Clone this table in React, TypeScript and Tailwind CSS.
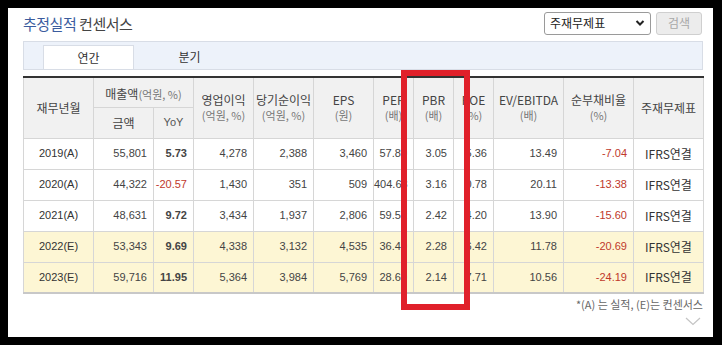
import React from 'react';

type Row = {
  year: string;
  sales: string;
  yoy: string;
  op: string;
  net: string;
  eps: string;
  per: string;
  pbr: string;
  roe: string;
  ev: string;
  debt: string;
  est?: boolean;
};

const rows: Row[] = [
  { year: '2019(A)', sales: '55,801', yoy: '5.73', op: '4,278', net: '2,388', eps: '3,460', per: '57.80', pbr: '3.05', roe: '5.36', ev: '13.49', debt: '-7.04' },
  { year: '2020(A)', sales: '44,322', yoy: '-20.57', op: '1,430', net: '351', eps: '509', per: '404.63', pbr: '3.16', roe: '0.78', ev: '20.11', debt: '-13.38' },
  { year: '2021(A)', sales: '48,631', yoy: '9.72', op: '3,434', net: '1,937', eps: '2,806', per: '59.52', pbr: '2.42', roe: '4.20', ev: '13.90', debt: '-15.60' },
  { year: '2022(E)', sales: '53,343', yoy: '9.69', op: '4,338', net: '3,132', eps: '4,535', per: '36.49', pbr: '2.28', roe: '6.42', ev: '11.78', debt: '-20.69', est: true },
  { year: '2023(E)', sales: '59,716', yoy: '11.95', op: '5,364', net: '3,984', eps: '5,769', per: '28.69', pbr: '2.14', roe: '7.71', ev: '10.56', debt: '-24.19', est: true },
];

const kr = "font-['Noto_Sans_CJK_KR','Noto_Sans',sans-serif]";
const num = "font-['Liberation_Sans','Noto_Sans_CJK_KR',sans-serif]";

const HeadCell: React.FC<{ top: string; sub?: string; rowSpan?: number }> = ({ top, sub, rowSpan }) => (
  <th
    rowSpan={rowSpan}
    className="border border-[#d6d6d6] bg-[#f1f1f1] p-0 text-center align-middle font-normal"
  >
    <div className="text-[12px] leading-[16px] text-[#444]">{top}</div>
    {sub && <div className="text-[11px] leading-[15px] text-[#777]">{sub}</div>}
  </th>
);

const isNeg = (v: string) => v.startsWith('-');

export default function App() {
  const td = 'border border-[#d6d6d6] h-[31px] p-0 pr-[6px] text-right text-[11px] text-[#444]';

  return (
    <div className="relative h-[345px] w-[722px] bg-black p-[8px] pr-[9px]">
      <div className={`h-[329px] w-[705px] bg-white pl-[15px] pr-[11px] pt-[4px] ${kr}`}>
        {/* title + controls */}
        <div className="flex h-[22px] items-center justify-between">
          <h2 className="pt-[3px] text-[15px] font-normal tracking-[-0.5px]">
            <span className="text-[#3b5c9e]">추정실적</span>{' '}
            <span className="text-[#444]">컨센서스</span>
          </h2>
          <div className="flex items-center gap-[5px]">
            <div className="flex h-[23px] w-[107px] items-center justify-between rounded-[3px] border border-[#9a9a9a] bg-white pl-[5px] pr-[5px]">
              <span className="text-[12px] text-[#222]">주재무제표</span>
              <svg width="10" height="8" viewBox="0 0 10 8">
                <path d="M1.5 2 L5 5.5 L8.5 2" fill="none" stroke="#222" strokeWidth="2" />
              </svg>
            </div>
            <button className="h-[23px] w-[46px] rounded-[3px] border border-[#cfcfcf] bg-[#ececec] text-[12px] text-[#a8a8a8]">
              검색
            </button>
          </div>
        </div>

        {/* tabs */}
        <div className="mt-[7px] flex h-[29px] w-[680px] items-end border border-[#d8dde6] bg-[#edf2fa] pl-[19px]">
          <div className="flex h-[24px] w-[91px] items-center justify-center border border-b-0 border-[#d8dde6] bg-white text-[12px] text-[#333]">
            연간
          </div>
          <div className="ml-[10px] flex h-[24px] w-[91px] items-center justify-center text-[12px] text-[#333]">
            분기
          </div>
        </div>

        {/* table */}
        <table className="mt-[6px] w-[680px] table-fixed border-collapse border-t-2 border-b-2 border-t-[#333] border-b-[#c8c8c8]">
          <colgroup>
            <col className="w-[70px]" />
            <col className="w-[60px]" />
            <col className="w-[40px]" />
            <col className="w-[60px]" />
            <col className="w-[60px]" />
            <col className="w-[60px]" />
            <col className="w-[40px]" />
            <col className="w-[40px]" />
            <col className="w-[40px]" />
            <col className="w-[70px]" />
            <col className="w-[70px]" />
            <col className="w-[70px]" />
          </colgroup>
          <thead>
            <tr className="h-[30px]">
              <HeadCell top="재무년월" rowSpan={2} />
              <th colSpan={2} className="border border-[#d6d6d6] bg-[#f1f1f1] p-0 text-center font-normal">
                <span className="text-[12px] text-[#444]">매출액</span>
                <span className="text-[11px] text-[#777]">(억원, %)</span>
              </th>
              <HeadCell top="영업이익" sub="(억원, %)" rowSpan={2} />
              <HeadCell top="당기순이익" sub="(억원, %)" rowSpan={2} />
              <HeadCell top="EPS" sub="(원)" rowSpan={2} />
              <HeadCell top="PER" sub="(배)" rowSpan={2} />
              <HeadCell top="PBR" sub="(배)" rowSpan={2} />
              <HeadCell top="ROE" sub="(%)" rowSpan={2} />
              <HeadCell top="EV/EBITDA" sub="(배)" rowSpan={2} />
              <HeadCell top="순부채비율" sub="(%)" rowSpan={2} />
              <HeadCell top="주재무제표" rowSpan={2} />
            </tr>
            <tr className="h-[31px]">
              <th className="border border-[#d6d6d6] bg-[#f1f1f1] p-0 text-[12px] font-normal text-[#444]">금액</th>
              <th className={`border border-[#d6d6d6] bg-[#f1f1f1] p-0 text-[11px] font-normal text-[#555] ${num}`}>YoY</th>
            </tr>
          </thead>
          <tbody>
            {rows.map((r) => (
              <tr key={r.year} className={r.est ? 'bg-[#fdf6d4]' : 'bg-white'}>
                <td className={`border border-[#d6d6d6] h-[31px] p-0 text-center text-[11px] text-[#333] ${num}`}>{r.year}</td>
                <td className={`${td} ${num}`}>{r.sales}</td>
                <td className={`${td} ${num} ${isNeg(r.yoy) ? 'text-[#c0392b]' : 'font-bold text-[#222]'}`}>{r.yoy}</td>
                <td className={`${td} ${num}`}>{r.op}</td>
                <td className={`${td} ${num}`}>{r.net}</td>
                <td className={`${td} ${num}`}>{r.eps}</td>
                <td className={`${td} ${num}`}>{r.per}</td>
                <td className={`${td} ${num}`}>{r.pbr}</td>
                <td className={`${td} ${num}`}>{r.roe}</td>
                <td className={`${td} ${num}`}>{r.ev}</td>
                <td className={`${td} ${num} text-[#c0392b]`}>{r.debt}</td>
                <td className="border border-[#d6d6d6] h-[31px] p-0 text-center text-[12px] text-[#333]">IFRS연결</td>
              </tr>
            ))}
          </tbody>
        </table>

        <div className="w-[680px] pt-[3px] text-right text-[11px] leading-[14px] text-[#666]">
          *(A) 는 실적, (E)는 컨센서스
        </div>
        <div className="flex w-[680px] justify-end pr-[2px] pt-[6px]">
          <svg width="16" height="9" viewBox="0 0 16 9">
            <path d="M1 1 L8 7.5 L15 1" fill="none" stroke="#c4c4c4" strokeWidth="1.2" />
          </svg>
        </div>
      </div>

      {/* red highlight box */}
      <div className="absolute left-[401px] top-[70px] h-[240px] w-[69px] border-[6px] border-[#e0202a]" />
    </div>
  );
}
